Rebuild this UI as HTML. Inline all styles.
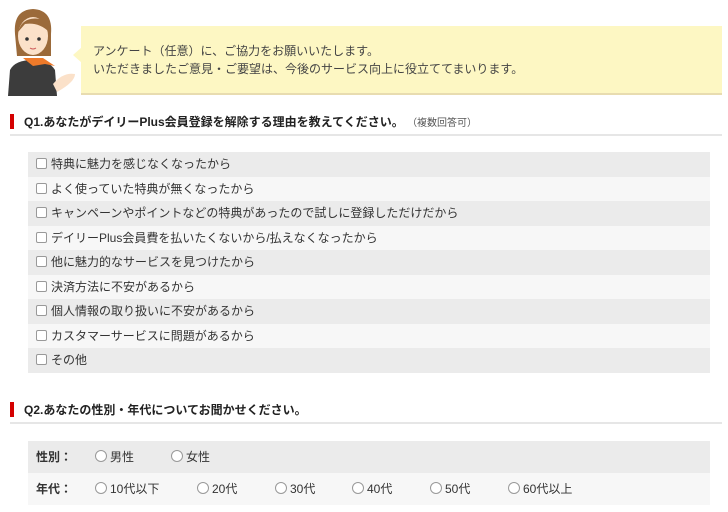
<!DOCTYPE html>
<html><head><meta charset="utf-8"><style>
body{margin:0;width:728px;height:512px;background:#fff;font-family:"Liberation Sans","Noto Sans CJK JP",sans-serif;color:#333;position:relative;overflow:hidden}
.bubble{position:absolute;left:81px;top:26px;width:641px;height:67px;background:#fdf7c3;border-bottom:2px solid #e8dcb0;font-size:12px;line-height:18px;color:#444}
.bubble p{margin:0;position:absolute;left:12px;top:16px}
.tail{position:absolute;left:73px;top:47px;width:0;height:0;border-top:8px solid transparent;border-bottom:8px solid transparent;border-right:9px solid #fdf7c3}
.h{position:absolute;left:10px;width:712px;border-bottom:2px solid #e6e6e6;font-size:12px;font-weight:bold;color:#222;height:22px}
.h:before{content:"";position:absolute;left:0;top:2px;width:4px;height:15px;background:#d40000}
.h span{position:absolute;left:14px;top:1px}
.h small{font-weight:normal;font-size:10px;color:#555}
.row{position:absolute;left:28px;width:682px;height:24.5px;font-size:12px;line-height:24px;color:#333}
.row:nth-child(odd){background:#ebebeb}
.row:nth-child(even){background:#f7f7f7}
.cb{display:inline-block;width:9px;height:9px;border:1px solid #999;border-radius:2px;background:#fff;vertical-align:-1px;margin:0 4px 0 8px}
.rd{display:inline-block;width:10px;height:10px;border:1px solid #999;border-radius:50%;background:#fff;vertical-align:-1px;margin-right:3px}
.tr{position:absolute;left:28px;width:682px;height:32px;font-size:12px;line-height:32px}
.tr b{position:absolute;left:8px}
.tr span{position:absolute}
</style></head><body>
<svg style="position:absolute;left:5px;top:4px" width="72" height="92" viewBox="0 0 72 92">
<path d="M10 30 Q8 6 28 5 Q48 6 46 30 L46 52 L12 52 Z" fill="#9b6a3a"/>
<ellipse cx="28" cy="32" rx="15" ry="19" fill="#fbe1c9"/>
<path d="M13 28 Q18 10 40 16 Q44 22 44 28 Q34 18 20 20 Z" fill="#9b6a3a"/>
<circle cx="22" cy="35" r="1.8" fill="#333"/><circle cx="34" cy="35" r="1.8" fill="#333"/>
<path d="M25 44 Q28 46 31 44" stroke="#c55" fill="none"/>
<path d="M3 92 L5 66 Q10 56 28 56 Q44 56 50 66 L52 92 Z" fill="#3c3c3c"/>
<path d="M18 54 L38 54 L50 62 L40 60 L28 62 Z" fill="#ee7a2a"/>
<path d="M48 80 Q58 68 70 70 Q70 78 52 88 Z" fill="#fbe1c9"/>
</svg>
<div class="tail"></div>
<div class="bubble"><p>アンケート（任意）に、ご協力をお願いいたします。<br>いただきましたご意見・ご要望は、今後のサービス向上に役立ててまいります。</p></div>
<div class="h" style="top:112px"><span>Q1.あなたがデイリーPlus会員登録を解除する理由を教えてください。 <small>（複数回答可）</small></span></div>
<div>
<div class="row" style="top:152px"><i class="cb"></i>特典に魅力を感じなくなったから</div>
<div class="row" style="top:176.5px"><i class="cb"></i>よく使っていた特典が無くなったから</div>
<div class="row" style="top:201px"><i class="cb"></i>キャンペーンやポイントなどの特典があったので試しに登録しただけだから</div>
<div class="row" style="top:225.5px"><i class="cb"></i>デイリーPlus会員費を払いたくないから/払えなくなったから</div>
<div class="row" style="top:250px"><i class="cb"></i>他に魅力的なサービスを見つけたから</div>
<div class="row" style="top:274.5px"><i class="cb"></i>決済方法に不安があるから</div>
<div class="row" style="top:299px"><i class="cb"></i>個人情報の取り扱いに不安があるから</div>
<div class="row" style="top:323.5px"><i class="cb"></i>カスタマーサービスに問題があるから</div>
<div class="row" style="top:348px"><i class="cb"></i>その他</div>
</div>
<div class="h" style="top:400px"><span>Q2.あなたの性別・年代についてお聞かせください。</span></div>
<div class="tr" style="top:441px;background:#ebebeb"><b>性別：</b><span style="left:67px"><i class="rd"></i>男性</span><span style="left:143px"><i class="rd"></i>女性</span></div>
<div class="tr" style="top:473px;background:#f7f7f7"><b>年代：</b><span style="left:67px"><i class="rd"></i>10代以下</span><span style="left:169px"><i class="rd"></i>20代</span><span style="left:247px"><i class="rd"></i>30代</span><span style="left:324px"><i class="rd"></i>40代</span><span style="left:402px"><i class="rd"></i>50代</span><span style="left:480px"><i class="rd"></i>60代以上</span></div>
</body></html>
